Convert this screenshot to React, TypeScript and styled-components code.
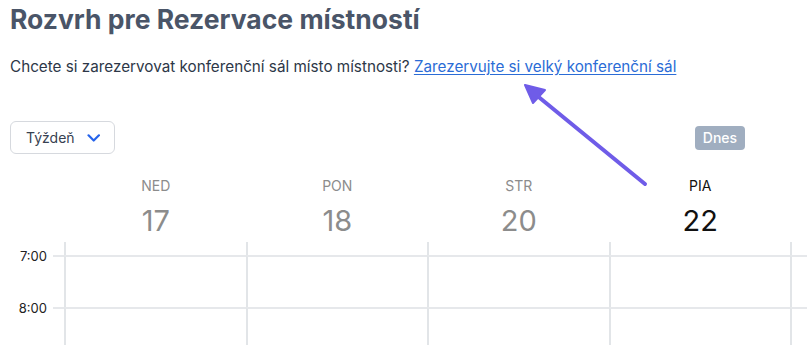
import React from "react";
import styled, { createGlobalStyle } from "styled-components";

const Global = createGlobalStyle`
  html, body { margin: 0; padding: 0; background: #fff; }
  body { font-family: Inter, "Noto Sans", "Liberation Sans", sans-serif; overflow: hidden; }
`;

const Page = styled.div`
  width: 807px;
  height: 345px;
  overflow: hidden;
  position: relative;
  padding-left: 10px;
  box-sizing: border-box;
`;

const Title = styled.h1`
  margin: 0;
  padding-top: 1px;
  font-size: 26.5px;
  line-height: 36px;
  font-weight: 700;
  color: #4a5568;
`;

const Intro = styled.p`
  margin: 18px 0 0;
  font-size: 15.25px;
  line-height: 24px;
  color: #2d3748;
`;

const Link = styled.a`
  color: #2b6cd6;
  text-decoration: underline;
  text-underline-offset: 2px;
`;

const Toolbar = styled.div`
  display: flex;
  align-items: center;
  justify-content: space-between;
  margin-top: 42px;
  padding-right: 62px;
`;

const ViewSelect = styled.button`
  display: flex;
  align-items: center;
  gap: 12px;
  height: 33px;
  width: 105px;
  box-sizing: border-box;
  padding: 0 14px 0 15px;
  border: 1px solid #d6d9de;
  border-radius: 6px;
  background: #fff;
  font: inherit;
  font-size: 14px;
  color: #374151;
`;

const TodayBadge = styled.span`
  display: inline-flex;
  align-items: center;
  justify-content: center;
  width: 50px;
  height: 24px;
  border-radius: 4px;
  background: #a0aec0;
  color: #fff;
  font-size: 14px;
  font-weight: 500;
`;

const COLS = "43px 12px repeat(4, 181.5px) 1fr";

const HeaderRow = styled.div`
  display: grid;
  grid-template-columns: ${COLS};
  margin-top: 23px;
`;

const DayHead = styled.div<{ $today?: boolean }>`
  display: flex;
  flex-direction: column;
  align-items: center;
  color: ${(p) => (p.$today ? "#111" : "#8c8c8c")};
`;

const DayName = styled.div`
  font-size: 14px;
  line-height: 18px;
`;

const DayNum = styled.div`
  margin-top: 9px;
  font-size: 29px;
  line-height: 34px;
`;

const Grid = styled.div`
  display: grid;
  grid-template-columns: ${COLS};
  grid-template-rows: 14px repeat(3, 52px);
  margin-top: 4px;
`;

const TimeLabel = styled.div`
  font-size: 13px;
  line-height: 16px;
  margin-top: -8px;
  padding-right: 6px;
  text-align: right;
  color: #222;
`;

const Cell = styled.div<{ $top?: boolean; $left?: boolean }>`
  border-top: ${(p) => (p.$top ? "2px solid #e6e8eb" : "none")};
  border-left: ${(p) => (p.$left ? "2px solid #e2e5e8" : "none")};
  margin-left: ${(p) => (p.$left ? "-1px" : "0")};
  margin-top: ${(p) => (p.$top ? "-1px" : "0")};
`;

const ArrowSvg = styled.svg`
  position: absolute;
  left: 0;
  top: 0;
  pointer-events: none;
`;

const days = [
  { name: "NED", num: 17 },
  { name: "PON", num: 18 },
  { name: "STR", num: 20 },
  { name: "PIA", num: 22, today: true },
];

const hours = ["7:00", "8:00", ""];

export default function App() {
  return (
    <Page>
      <Global />
      <Title>Rozvrh pre Rezervace místností</Title>
      <Intro>
        Chcete si zarezervovat konferenční sál místo místnosti?{" "}
        <Link href="#">Zarezervujte si velký konferenční sál</Link>
      </Intro>
      <Toolbar>
        <ViewSelect>
          Týždeň
          <svg width="16" height="10" viewBox="0 0 16 10" fill="none">
            <path d="M1.8 1.8 8 8l6.2-6.2" stroke="#2563eb" strokeWidth="2.6" strokeLinecap="round" strokeLinejoin="round" />
          </svg>
        </ViewSelect>
        <TodayBadge>Dnes</TodayBadge>
      </Toolbar>
      <HeaderRow>
        <div />
        <div />
        {days.map((d) => (
          <DayHead key={d.name} $today={d.today}>
            <DayName>{d.name}</DayName>
            <DayNum>{d.num}</DayNum>
          </DayHead>
        ))}
        <div />
      </HeaderRow>
      <Grid>
        <div />
        <Cell />
        {days.map((d) => (
          <Cell key={d.name} $left />
        ))}
        <Cell $left />
        {hours.map((h, i) => (
          <React.Fragment key={i}>
            <TimeLabel>{h}</TimeLabel>
            <Cell $top={h !== ""} />
            {days.map((d) => (
              <Cell key={d.name} $top={h !== ""} $left />
            ))}
            <Cell $top={h !== ""} $left />
          </React.Fragment>
        ))}
      </Grid>
      <ArrowSvg width="807" height="345" viewBox="0 0 807 345">
        <line x1="645" y1="184" x2="535" y2="94" stroke="#6f5ce8" strokeWidth="4" strokeLinecap="round" />
        <polygon points="525,85 545,90 533,103" fill="#6f5ce8" stroke="#6f5ce8" strokeWidth="2" strokeLinejoin="round" />
      </ArrowSvg>
    </Page>
  );
}
